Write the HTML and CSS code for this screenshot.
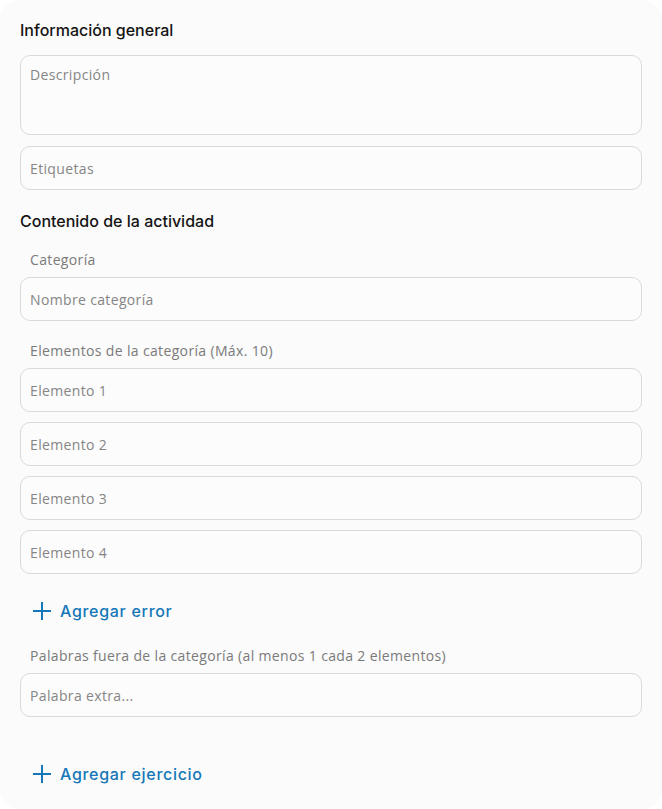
FILE: index.html
```html
<!DOCTYPE html>
<html lang="es">
<head>
	<meta charset="UTF-8">
	<title>Actividad</title>
	<link rel="stylesheet" href="styles.css">
</head>
<body>
	<div class="card">
		<h2 class="section-title">Información general</h2>
		<textarea class="field field-area" placeholder="Descripción"></textarea>
		<input class="field" type="text" placeholder="Etiquetas">

		<h2 class="section-title second">Contenido de la actividad</h2>
		<label class="label">Categoría</label>
		<input class="field" type="text" placeholder="Nombre categoría">

		<label class="label">Elementos de la categoría (Máx. 10)</label>
		<div class="list">
			<input class="field" type="text" placeholder="Elemento 1">
			<input class="field" type="text" placeholder="Elemento 2">
			<input class="field" type="text" placeholder="Elemento 3">
			<input class="field" type="text" placeholder="Elemento 4">
		</div>

		<button class="add" type="button">
			<svg width="20" height="20" viewBox="0 0 20 20"><path d="M10 1v18M1 10h18" stroke="currentColor" stroke-width="2" fill="none"/></svg>
			<span>Agregar error</span>
		</button>

		<label class="label label-extra">Palabras fuera de la categoría (al menos 1 cada 2 elementos)</label>
		<input class="field" type="text" placeholder="Palabra extra...">

		<button class="add add-bottom" type="button">
			<svg width="20" height="20" viewBox="0 0 20 20"><path d="M10 1v18M1 10h18" stroke="currentColor" stroke-width="2" fill="none"/></svg>
			<span>Agregar ejercicio</span>
		</button>
	</div>
</body>
</html>
```

FILE: styles.css
```css
html, body {
	margin: 0;
	padding: 0;
	background: #ffffff;
}
.card {
	box-sizing: border-box;
	height: 809px;
	background: #fbfbfb;
	border-radius: 20px;
	padding: 20px 20px 0 20px;
	display: flex;
	flex-direction: column;
	font-family: "Open Sans", sans-serif;
}
.section-title {
	margin: 0 0 15px 0;
	font-family: "Inter", sans-serif;
	font-size: 16px;
	line-height: 20px;
	font-weight: 500;
	color: #141414;
}
.section-title.second {
	margin: 10px 0 10px 0;
}
.field {
	box-sizing: border-box;
	flex: none;
	width: 100%;
	height: 44px;
	margin: 0 0 11px 0;
	padding: 0 9px;
	border: 1px solid #dadada;
	border-radius: 10px;
	background: #fcfcfc;
	font-family: "Open Sans", sans-serif;
	font-size: 14px;
	letter-spacing: 0.35px;
	color: #333;
	outline: none;
}
.field::placeholder {
	color: #858585;
}
.field-area {
	height: 80px;
	padding-top: 9px;
	resize: none;
	display: block;
}
.label {
	display: block;
	margin: 10px 0 8px 0;
	padding: 0 10px;
	height: 18px;
	line-height: 18px;
	font-size: 14px;
	letter-spacing: 0.35px;
	color: #7a7a7a;
}
.label-extra {
	margin-top: 8px;
}
.list {
	display: flex;
	flex-direction: column;
	gap: 10px;
}
.list .field {
	margin: 0;
}
.add {
	display: flex;
	flex: none;
	align-items: center;
	gap: 8px;
	height: 56px;
	margin: 9px 0 0 0;
	padding: 0 0 0 12px;
	border: none;
	background: none;
	color: #1577b8;
	font-family: "Inter", sans-serif;
	font-size: 16px;
	font-weight: 500;
	letter-spacing: 0.7px;
	cursor: pointer;
}
.add-bottom {
	margin-top: 18px;
}
```
